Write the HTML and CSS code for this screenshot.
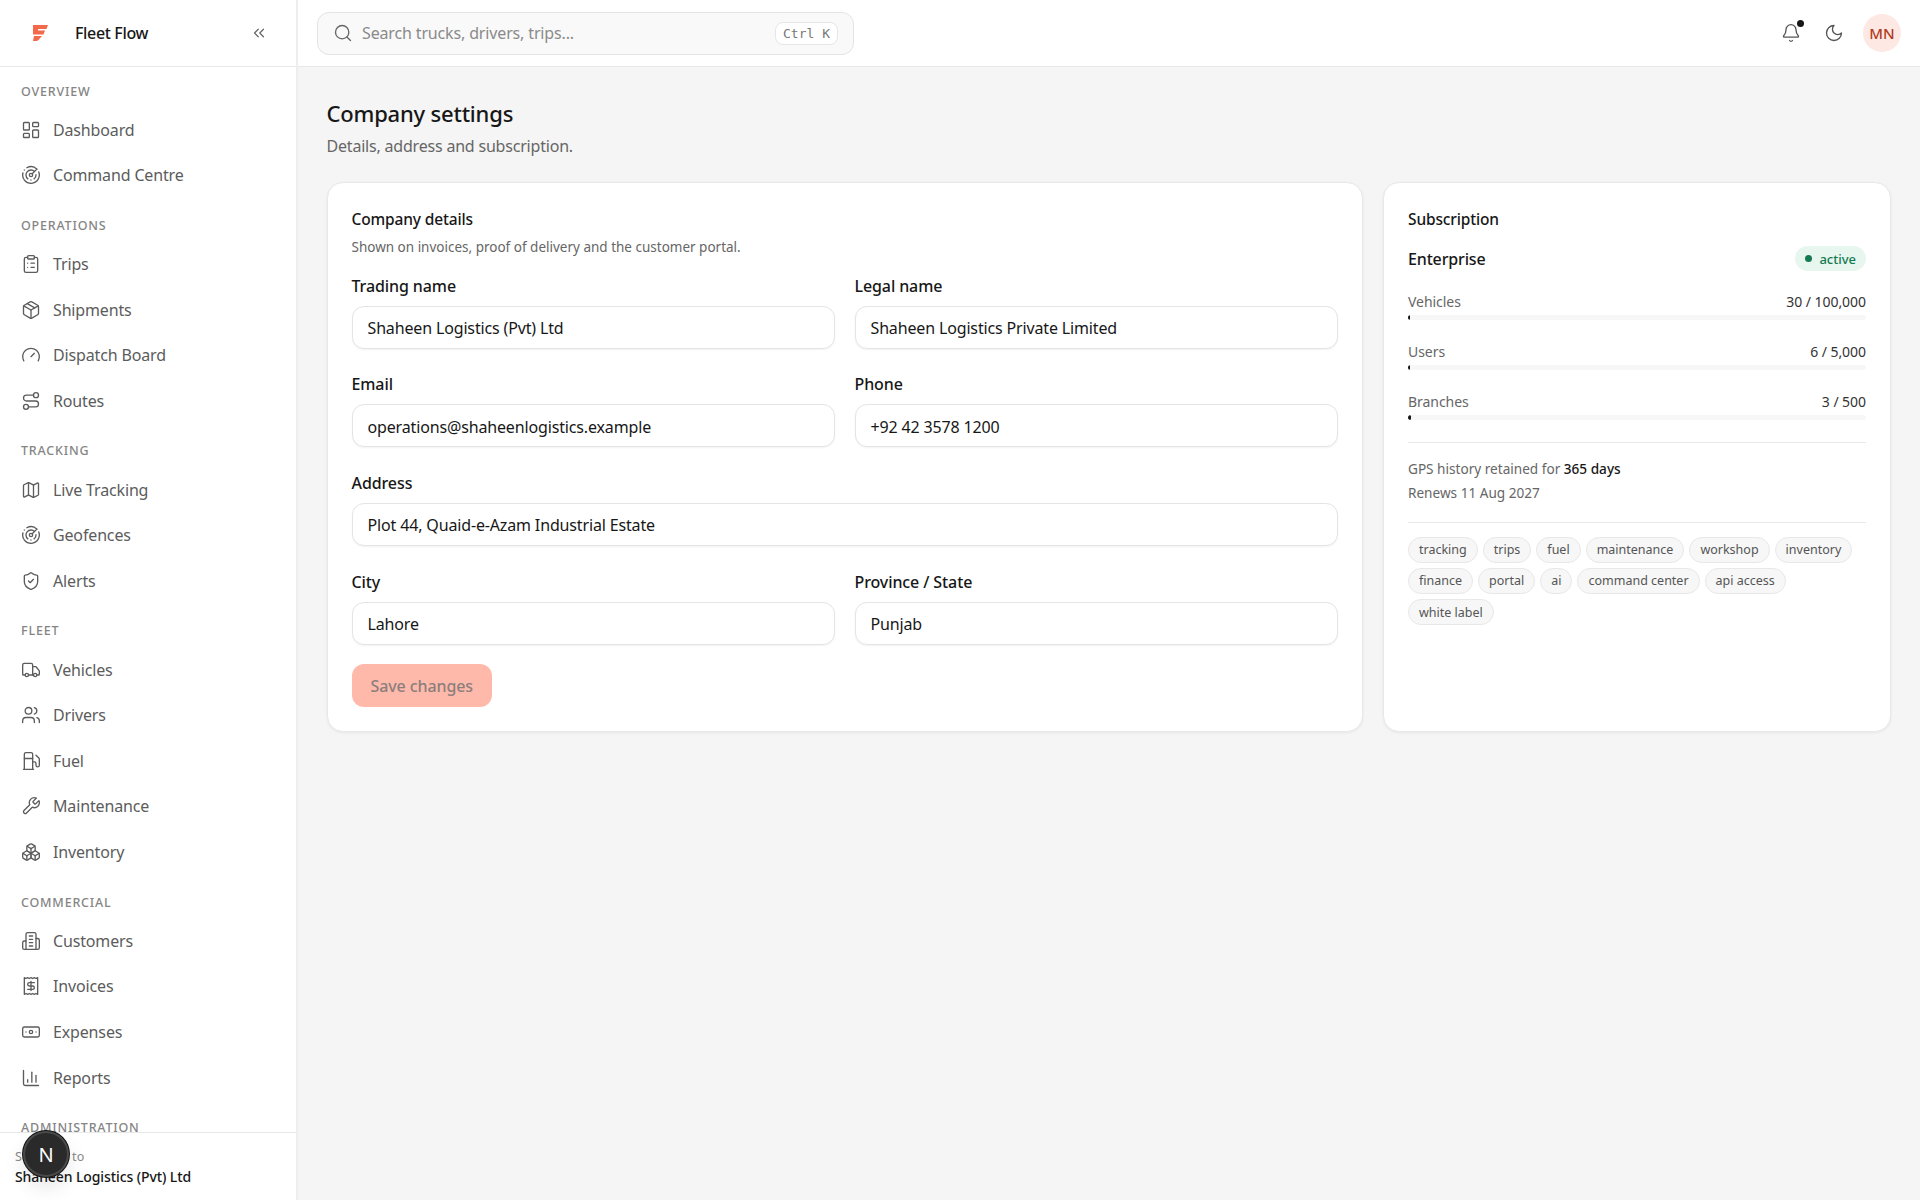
FILE: index.html
```html
<!DOCTYPE html>
<html lang="en">
<head>
<meta charset="utf-8">
<title>Company settings</title>
<link rel="stylesheet" href="styles.css">
</head>
<body>
<svg class="defs" width="0" height="0" aria-hidden="true">
<defs>
<symbol id="i-dash" viewBox="0 0 24 24"><rect x="3" y="3" width="7" height="9" rx="1"/><rect x="14" y="3" width="7" height="5" rx="1"/><rect x="14" y="12" width="7" height="9" rx="1"/><rect x="3" y="16" width="7" height="5" rx="1"/></symbol>
<symbol id="i-radar" viewBox="0 0 24 24"><path d="M19.07 4.93A10 10 0 0 0 6.99 3.34"/><path d="M4 6h.01"/><path d="M2.29 9.62A10 10 0 1 0 21.31 8.35"/><path d="M16.24 7.76A6 6 0 1 0 8.23 16.67"/><path d="M12 18h.01"/><path d="M17.99 11.66A6 6 0 0 1 15.77 16.67"/><circle cx="12" cy="12" r="2"/><path d="m13.41 10.59 5.66-5.66"/></symbol>
<symbol id="i-clip" viewBox="0 0 24 24"><rect x="8" y="2" width="8" height="4" rx="1"/><path d="M16 4h2a2 2 0 0 1 2 2v14a2 2 0 0 1-2 2H6a2 2 0 0 1-2-2V6a2 2 0 0 1 2-2h2"/><path d="M12 11h4"/><path d="M12 16h4"/><path d="M8 11h.01"/><path d="M8 16h.01"/></symbol>
<symbol id="i-pkg" viewBox="0 0 24 24"><path d="M11 21.73a2 2 0 0 0 2 0l7-4A2 2 0 0 0 21 16V8a2 2 0 0 0-1-1.73l-7-4a2 2 0 0 0-2 0l-7 4A2 2 0 0 0 3 8v8a2 2 0 0 0 1 1.73z"/><path d="M12 22V12"/><polyline points="3.29 7 12 12 20.71 7"/><path d="m7.5 4.27 9 5.15"/></symbol>
<symbol id="i-gauge" viewBox="0 0 24 24"><path d="m12 14 4-4"/><path d="M3.34 19a10 10 0 1 1 17.32 0"/></symbol>
<symbol id="i-route" viewBox="0 0 24 24"><circle cx="6" cy="19" r="3"/><path d="M9 19h8.5a3.5 3.5 0 0 0 0-7h-11a3.5 3.5 0 0 1 0-7H15"/><circle cx="18" cy="5" r="3"/></symbol>
<symbol id="i-map" viewBox="0 0 24 24"><path d="M14.106 5.553a2 2 0 0 0 1.788 0l3.659-1.83A1 1 0 0 1 21 4.619v12.764a1 1 0 0 1-.553.894l-4.553 2.277a2 2 0 0 1-1.788 0l-4.212-2.106a2 2 0 0 0-1.788 0l-3.659 1.83A1 1 0 0 1 3 19.381V6.618a1 1 0 0 1 .553-.894l4.553-2.277a2 2 0 0 1 1.788 0z"/><path d="M15 5.764v15"/><path d="M9 3.236v15"/></symbol>
<symbol id="i-shield" viewBox="0 0 24 24"><path d="M20 13c0 5-3.5 7.5-7.66 8.95a1 1 0 0 1-.67-.01C7.5 20.5 4 18 4 13V6a1 1 0 0 1 1-1c2 0 4.5-1.2 6.24-2.72a1.17 1.17 0 0 1 1.52 0C14.51 3.81 17 5 19 5a1 1 0 0 1 1 1z"/><path d="m9 12 2 2 4-4"/></symbol>
<symbol id="i-truck" viewBox="0 0 24 24"><path d="M14 18V6a2 2 0 0 0-2-2H4a2 2 0 0 0-2 2v11a1 1 0 0 0 1 1h2"/><path d="M15 18H9"/><path d="M19 18h2a1 1 0 0 0 1-1v-3.65a1 1 0 0 0-.22-.624l-3.48-4.35A1 1 0 0 0 17.52 8H14"/><circle cx="17" cy="18" r="2"/><circle cx="7" cy="18" r="2"/></symbol>
<symbol id="i-users" viewBox="0 0 24 24"><path d="M16 21v-2a4 4 0 0 0-4-4H6a4 4 0 0 0-4 4v2"/><circle cx="9" cy="7" r="4"/><path d="M22 21v-2a4 4 0 0 0-3-3.87"/><path d="M16 3.13a4 4 0 0 1 0 7.75"/></symbol>
<symbol id="i-fuel" viewBox="0 0 24 24"><line x1="3" y1="22" x2="15" y2="22"/><line x1="4" y1="9" x2="14" y2="9"/><path d="M14 22V4a2 2 0 0 0-2-2H6a2 2 0 0 0-2 2v18"/><path d="M14 13h2a2 2 0 0 1 2 2v2a2 2 0 0 0 2 2a2 2 0 0 0 2-2V9.83a2 2 0 0 0-.59-1.42L18 5"/></symbol>
<symbol id="i-wrench" viewBox="0 0 24 24"><path d="M14.7 6.3a1 1 0 0 0 0 1.4l1.6 1.6a1 1 0 0 0 1.4 0l3.77-3.77a6 6 0 0 1-7.94 7.94l-6.91 6.91a2.12 2.12 0 0 1-3-3l6.91-6.91a6 6 0 0 1 7.94-7.94l-3.76 3.76z"/></symbol>
<symbol id="i-boxes" viewBox="0 0 24 24"><path d="M2.97 12.92A2 2 0 0 0 2 14.63v3.24a2 2 0 0 0 .97 1.71l3 1.8a2 2 0 0 0 2.06 0L12 19v-5.5l-5-3-4.03 2.42Z"/><path d="m7 16.5-4.74-2.85"/><path d="m7 16.5 5-3"/><path d="M7 16.5v5.17"/><path d="M12 13.5V19l3.97 2.38a2 2 0 0 0 2.06 0l3-1.8a2 2 0 0 0 .97-1.71v-3.24a2 2 0 0 0-.97-1.71L17 10.5l-5 3Z"/><path d="m17 16.5-5-3"/><path d="m17 16.5 4.74-2.85"/><path d="M17 16.5v5.17"/><path d="M7.97 4.42A2 2 0 0 0 7 6.13v4.37l5 3 5-3V6.13a2 2 0 0 0-.97-1.71l-3-1.8a2 2 0 0 0-2.06 0l-3 1.8Z"/><path d="M12 8 7.26 5.15"/><path d="m12 8 4.74-2.85"/><path d="M12 13.5V8"/></symbol>
<symbol id="i-bldg" viewBox="0 0 24 24"><path d="M6 22V4a2 2 0 0 1 2-2h8a2 2 0 0 1 2 2v18Z"/><path d="M6 12H4a2 2 0 0 0-2 2v6a2 2 0 0 0 2 2h2"/><path d="M18 9h2a2 2 0 0 1 2 2v9a2 2 0 0 1-2 2h-2"/><path d="M10 6h4"/><path d="M10 10h4"/><path d="M10 14h4"/><path d="M10 18h4"/></symbol>
<symbol id="i-receipt" viewBox="0 0 24 24"><path d="M4 2v20l2-1 2 1 2-1 2 1 2-1 2 1 2-1 2 1V2l-2 1-2-1-2 1-2-1-2 1-2-1-2 1Z"/><path d="M16 8h-6a2 2 0 1 0 0 4h4a2 2 0 1 1 0 4H8"/><path d="M12 17.5v-11"/></symbol>
<symbol id="i-bank" viewBox="0 0 24 24"><rect x="2" y="6" width="20" height="12" rx="2"/><circle cx="12" cy="12" r="2"/><path d="M6 12h.01M18 12h.01"/></symbol>
<symbol id="i-chart" viewBox="0 0 24 24"><path d="M3 3v16a2 2 0 0 0 2 2h16"/><path d="M18 17V9"/><path d="M13 17V5"/><path d="M8 17v-3"/></symbol>
</defs>
</svg>
<div class="app">
  <aside class="sidebar">
    <div class="brand">
      <svg class="logo" viewBox="0 0 15 17"><path d="M0 0H15L13.5 4H5V5.5H12L10.5 9.5H0Z"/><path d="M1 11H9L5.5 15Q4.5 16 3 16H0Z"/></svg>
      <span class="brand-name">Fleet Flow</span>
      <svg class="ico collapse" viewBox="0 0 24 24"><path d="m11 17-5-5 5-5"/><path d="m18 17-5-5 5-5"/></svg>
    </div>
    <nav class="nav">
      <div class="nav-label">Overview</div>
      <a class="nav-item"><svg class="ico"><use href="#i-dash"/></svg>Dashboard</a>
      <a class="nav-item"><svg class="ico"><use href="#i-radar"/></svg>Command Centre</a>
      <div class="nav-label">Operations</div>
      <a class="nav-item"><svg class="ico"><use href="#i-clip"/></svg>Trips</a>
      <a class="nav-item"><svg class="ico"><use href="#i-pkg"/></svg>Shipments</a>
      <a class="nav-item"><svg class="ico"><use href="#i-gauge"/></svg>Dispatch Board</a>
      <a class="nav-item"><svg class="ico"><use href="#i-route"/></svg>Routes</a>
      <div class="nav-label">Tracking</div>
      <a class="nav-item"><svg class="ico"><use href="#i-map"/></svg>Live Tracking</a>
      <a class="nav-item"><svg class="ico"><use href="#i-radar"/></svg>Geofences</a>
      <a class="nav-item"><svg class="ico"><use href="#i-shield"/></svg>Alerts</a>
      <div class="nav-label">Fleet</div>
      <a class="nav-item"><svg class="ico"><use href="#i-truck"/></svg>Vehicles</a>
      <a class="nav-item"><svg class="ico"><use href="#i-users"/></svg>Drivers</a>
      <a class="nav-item"><svg class="ico"><use href="#i-fuel"/></svg>Fuel</a>
      <a class="nav-item"><svg class="ico"><use href="#i-wrench"/></svg>Maintenance</a>
      <a class="nav-item"><svg class="ico"><use href="#i-boxes"/></svg>Inventory</a>
      <div class="nav-label">Commercial</div>
      <a class="nav-item"><svg class="ico"><use href="#i-bldg"/></svg>Customers</a>
      <a class="nav-item"><svg class="ico"><use href="#i-receipt"/></svg>Invoices</a>
      <a class="nav-item"><svg class="ico"><use href="#i-bank"/></svg>Expenses</a>
      <a class="nav-item"><svg class="ico"><use href="#i-chart"/></svg>Reports</a>
      <div class="nav-label">Administration</div>
    </nav>
    <div class="side-foot">
      <div class="foot-label">Switched to</div>
      <div class="foot-name">Shaheen Logistics (Pvt) Ltd</div>
      <div class="dev-badge">N</div>
    </div>
  </aside>
  <div class="content">
    <header class="topbar">
      <div class="search">
        <svg class="ico search-ico" viewBox="0 0 24 24"><circle cx="11" cy="11" r="8"/><path d="m21 21-4.3-4.3"/></svg>
        <span class="search-text">Search trucks, drivers, trips...</span>
        <kbd class="kbd">Ctrl K</kbd>
      </div>
      <div class="top-actions">
        <span class="bell"><svg class="ico" viewBox="0 0 24 24"><path d="M10.268 21a2 2 0 0 0 3.464 0"/><path d="M3.262 15.326A1 1 0 0 0 4 17h16a1 1 0 0 0 .74-1.673C19.41 13.956 18 12.499 18 8A6 6 0 0 0 6 8c0 4.499-1.411 5.956-2.738 7.326"/></svg><i class="bell-dot"></i></span>
        <svg class="ico" viewBox="0 0 24 24"><path d="M12 3a6 6 0 0 0 9 9 9 9 0 1 1-9-9Z"/></svg>
        <span class="avatar">MN</span>
      </div>
    </header>
    <main class="main">
      <h1 class="title">Company settings</h1>
      <p class="subtitle">Details, address and subscription.</p>
      <div class="cards">
        <section class="card">
          <h2 class="card-title">Company details</h2>
          <p class="card-desc">Shown on invoices, proof of delivery and the customer portal.</p>
          <div class="form">
            <label class="field"><span class="field-label">Trading name</span><span class="input">Shaheen Logistics (Pvt) Ltd</span></label>
            <label class="field"><span class="field-label">Legal name</span><span class="input">Shaheen Logistics Private Limited</span></label>
            <label class="field"><span class="field-label">Email</span><span class="input">operations@shaheenlogistics.example</span></label>
            <label class="field"><span class="field-label">Phone</span><span class="input">+92 42 3578 1200</span></label>
            <label class="field wide"><span class="field-label">Address</span><span class="input">Plot 44, Quaid-e-Azam Industrial Estate</span></label>
            <label class="field"><span class="field-label">City</span><span class="input">Lahore</span></label>
            <label class="field"><span class="field-label">Province / State</span><span class="input">Punjab</span></label>
          </div>
          <button class="save" type="button">Save changes</button>
        </section>
        <section class="card">
          <h2 class="card-title">Subscription</h2>
          <div class="plan"><span class="plan-name">Enterprise</span><span class="badge"><i class="badge-dot"></i>active</span></div>
          <div class="meter"><div class="meter-row"><span class="meter-key">Vehicles</span><span>30 / 100,000</span></div><div class="track"><div class="fill" style="width:2px"></div></div></div>
          <div class="meter"><div class="meter-row"><span class="meter-key">Users</span><span>6 / 5,000</span></div><div class="track"><div class="fill" style="width:2px"></div></div></div>
          <div class="meter"><div class="meter-row"><span class="meter-key">Branches</span><span>3 / 500</span></div><div class="track"><div class="fill" style="width:3px"></div></div></div>
          <div class="info">
            <p>GPS history retained for <strong>365 days</strong></p>
            <p>Renews 11 Aug 2027</p>
          </div>
          <div class="chips">
            <span class="chip">tracking</span><span class="chip">trips</span><span class="chip">fuel</span><span class="chip">maintenance</span><span class="chip">workshop</span><span class="chip">inventory</span><span class="chip">finance</span><span class="chip">portal</span><span class="chip">ai</span><span class="chip">command center</span><span class="chip">api access</span><span class="chip">white label</span>
          </div>
        </section>
      </div>
    </main>
  </div>
</div>
</body>
</html>
```
FILE: styles.css
```css
* { box-sizing: border-box; }
html, body { margin: 0; height: 100%; }
body { font-family: "Noto Sans", "Open Sans", sans-serif; color: #171717; background: #f5f5f5; font-size: 16px; overflow: hidden; }
.defs { position: absolute; }
.app { display: flex; height: 1200px; }
.ico { width: 20px; height: 20px; flex: none; fill: none; stroke: currentColor; stroke-width: 1.6; stroke-linecap: round; stroke-linejoin: round; }

.sidebar { width: 298px; flex: none; display: flex; flex-direction: column; background: #fff; border-right: 2px solid #eeeeee; position: relative; }
.brand { height: 67px; flex: none; display: flex; align-items: center; padding: 0 28px 0 33px; border-bottom: 1px solid #e8e8e8; }
.logo { width: 15px; height: 17px; fill: #f4694a; flex: none; }
.brand-name { margin-left: 27px; font-size: 16px; font-weight: 500; letter-spacing: -.35px; flex: 1; }
.collapse { color: #666; width: 18px; height: 18px; }
.nav { flex: 1; overflow: hidden; padding: 0 21px; min-height: 0; }
.nav-label { height: 24px; line-height: 24px; margin-top: 15.8px; margin-bottom: 3.4px; font-size: 12.5px; font-weight: 500; letter-spacing: .8px; color: #858585; text-transform: uppercase; }
.nav-label:first-child { margin-top: 12.5px; }
.nav-item { display: flex; align-items: center; gap: 12px; height: 45.6px; font-size: 16px; letter-spacing: -.15px; color: #5c5c5c; }
.side-foot { height: 68px; flex: none; border-top: 1px solid #e8e8e8; padding: 15px 15px 0; position: relative; background: #fff; }
.foot-label { font-size: 12.5px; letter-spacing: .1px; color: #8a8a8a; line-height: 18px; }
.foot-name { font-size: 14px; font-weight: 500; letter-spacing: -.1px; line-height: 20px; margin-top: 1px; }
.dev-badge { position: absolute; left: 23px; top: -2px; width: 46px; height: 46px; border-radius: 50%; background: #2a2a2a; border: 2px solid #4a4a4a; color: #fff; display: flex; align-items: center; justify-content: center; font-size: 20px; box-shadow: 0 0 0 1px #111, 0 10px 20px rgba(0,0,0,.1); }

.content { flex: 1; min-width: 0; display: flex; flex-direction: column; }
.topbar { height: 67px; flex: none; display: flex; align-items: center; justify-content: space-between; background: #fff; border-bottom: 1px solid #e8e8e8; padding: 0 19px 0 19px; }
.search { width: 537px; height: 43px; display: flex; align-items: center; gap: 9px; padding: 0 15px; background: #f9f9f9; border: 1px solid #e4e4e4; border-radius: 12px; }
.search-ico { color: #666; }
.search-text { flex: 1; font-size: 16px; letter-spacing: -.15px; color: #8a8a8a; }
.kbd { font-family: "DejaVu Sans Mono", monospace; font-size: 13px; color: #777; background: #fff; border: 1px solid #e6e6e6; border-radius: 8px; padding: 3px 7px; }
.top-actions { display: flex; align-items: center; gap: 23px; color: #555; }
.bell { position: relative; display: flex; }
.bell-dot { position: absolute; top: -3px; right: -3px; width: 7px; height: 7px; border-radius: 50%; background: #171717; }
.avatar { width: 38px; height: 38px; border-radius: 50%; background: #fde8e3; color: #b23a1e; display: flex; align-items: center; justify-content: center; font-size: 15px; font-weight: 500; margin-left: -4px; }

.main { flex: 1; padding: 27px 29px 27px 28.5px; }
.title { margin: 0; font-size: 22px; line-height: 38px; font-weight: 500; letter-spacing: -.2px; }
.subtitle { margin: 1px 0 0; font-size: 16px; line-height: 26px; letter-spacing: -.2px; color: #666; }
.cards { display: grid; grid-template-columns: 1036.5px 508px; gap: 20px; margin-top: 23px; }
.card { background: #fff; border: 1px solid #e8e8e8; border-radius: 16px; padding: 24px; box-shadow: 0 1px 3px rgba(0,0,0,.06); }
.card-title { margin: 0; font-size: 15.5px; line-height: 24px; font-weight: 500; letter-spacing: -.15px; }
.card-desc { margin: 4.5px 0 0; font-size: 13.5px; line-height: 22px; color: #666; }
.form { display: grid; grid-template-columns: 1fr 1fr; gap: 23.7px 19.5px; margin-top: 16px; }
.field { display: flex; flex-direction: column; gap: 8px; }
.wide { grid-column: span 2; }
.field-label { font-size: 16px; font-weight: 500; letter-spacing: -.1px; line-height: 24px; }
.input { height: 43px; display: flex; align-items: center; padding: 2px 15px 0; background: #fff; border: 1px solid #e4e4e4; border-radius: 12px; font-size: 16px; letter-spacing: -.15px; box-shadow: 0 1px 2px rgba(0,0,0,.05); }
.save { display: block; margin-top: 19.5px; height: 43px; width: 140.5px; border: 0; border-radius: 12px; background: #ffb9ab; color: #8b7e7c; font: 500 16px "Noto Sans", sans-serif; letter-spacing: -.1px; }
.plan { display: flex; align-items: center; justify-content: space-between; margin-top: 15px; }
.plan-name { font-size: 16px; font-weight: 500; letter-spacing: -.15px; }
.badge { display: flex; align-items: center; gap: 7px; height: 25px; padding: 0 10px; border-radius: 13px; background: #e7f6ee; color: #157a52; font-size: 13px; font-weight: 500; }
.badge-dot { width: 7px; height: 7px; border-radius: 50%; background: #157a52; }
.meter { margin-top: 21px; }
.plan + .meter { margin-top: 20px; }
.meter-row { display: flex; justify-content: space-between; font-size: 14px; letter-spacing: -.05px; line-height: 22px; color: #333; }
.meter-key { color: #666; }
.track { height: 5px; margin-top: 2px; border-radius: 3px; background: #f7f7f7; overflow: hidden; }
.fill { height: 100%; background: #171717; border-radius: 3px; }
.info { margin-top: 21.5px; padding: 14px 0 16px; border-top: 1px solid #e8e8e8; border-bottom: 1px solid #e8e8e8; font-size: 13.6px; line-height: 24.5px; color: #666; }
.info p { margin: 0; }
.info strong { color: #171717; font-weight: 500; }
.chips { display: flex; flex-wrap: wrap; gap: 5.3px 5px; margin-top: 14px; }
.chip { height: 26px; display: flex; align-items: center; padding: 0 10px; border: 1px solid #e8e8e8; border-radius: 13px; background: #f7f7f7; font-size: 12.5px; color: #555; }
```
